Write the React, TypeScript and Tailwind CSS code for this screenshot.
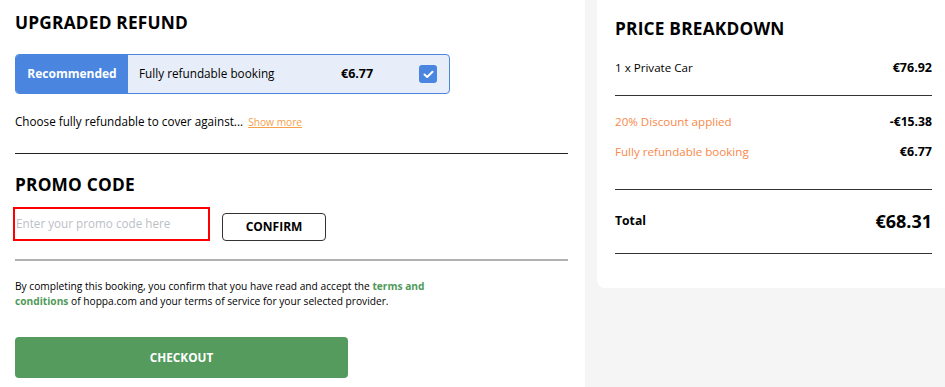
export default function App() {
  return (
    <div className="flex h-[387px] w-[945px] overflow-hidden bg-white font-['Open_Sans',sans-serif] text-black">
      <div className="w-[585px] shrink-0 bg-white pl-[15px] pr-[17px]">
        <h2 className="mt-[10px] text-[17.3px] font-bold leading-[26px] tracking-[0.2px]">UPGRADED REFUND</h2>

        <div className="mt-[18px] flex h-[40px] w-[435px] overflow-hidden rounded-[4px] border border-[#4a86e0] bg-[#e8eef9]">
          <div className="flex w-[112px] items-center justify-center bg-[#4a86e0] text-[12px] font-bold text-white">
            Recommended
          </div>
          <div className="flex flex-1 items-center pl-[11px] text-[11.75px]">
            <span className="w-[202px]">Fully refundable booking</span>
            <span className="text-[12.5px] font-bold">€6.77</span>
            <span className="ml-auto mr-[12px] flex h-[18px] w-[18px] items-center justify-center rounded-[3px] bg-[#4a86e0]">
              <svg width="11" height="9" viewBox="0 0 11 9" fill="none">
                <path d="M1.5 4.5 L4.2 7 L9.5 1.8" stroke="white" strokeWidth="2" strokeLinecap="round" strokeLinejoin="round" />
              </svg>
            </span>
          </div>
        </div>

        <p className="mt-[17px] text-[11.7px] leading-[20px]">
          Choose fully refundable to cover against...{" "}
          <span className="ml-[2px] text-[10.2px] text-[#f5a04a] underline">Show more</span>
        </p>

        <div className="mt-[21px] h-px bg-[#222]" />

        <h2 className="mt-[18px] text-[17.3px] font-bold leading-[26px] tracking-[0.2px]">PROMO CODE</h2>

        <div className="mt-[9px] flex items-center">
          <div className="-ml-[2px] flex h-[34px] w-[197px] items-center border-2 border-[#f00] pl-[1px] text-[11.7px] text-[#bcc0c6]">
            Enter your promo code here
          </div>
          <button className="ml-[12px] mt-[6px] h-[28px] w-[104px] rounded-[4px] border border-[#333] text-[12px] font-bold">
            CONFIRM
          </button>
        </div>

        <div className="mt-[18px] h-[2px] bg-[#b0b0b0]" />

        <p className="mt-[18px] text-[10.2px] leading-[15px]">
          By completing this booking, you confirm that you have read and accept the{" "}
          <span className="font-bold text-[#4f9a5a]">terms and</span>
          <br />
          <span className="font-bold text-[#4f9a5a]">conditions</span> of hoppa.com and your terms of service for your selected provider.
        </p>

        <button className="mt-[28px] h-[41px] w-[333px] rounded-[4px] bg-[#559b5e] text-[11.75px] font-bold text-white">
          CHECKOUT
        </button>
      </div>

      <div className="flex-1 bg-[#f5f5f5] pl-[12px]">
        <div className="h-[288px] rounded-bl-[8px] bg-white pl-[18px] pr-[13px]">
          <h2 className="pt-[16px] text-[17.3px] font-bold leading-[26px] tracking-[0.2px]">PRICE BREAKDOWN</h2>

          <div className="mt-[16px] flex justify-between text-[11.6px] leading-[20px]">
            <span>1 x Private Car</span>
            <span className="text-[12.5px] font-bold">€76.92</span>
          </div>

          <div className="mt-[17px] h-px bg-[#333]" />

          <div className="mt-[16px] flex justify-between text-[11.6px] leading-[20px]">
            <span className="text-[#f7894a]">20% Discount applied</span>
            <span className="text-[12.2px] font-bold">-€15.38</span>
          </div>
          <div className="mt-[10px] flex justify-between text-[11.6px] leading-[20px]">
            <span className="text-[#f7894a]">Fully refundable booking</span>
            <span className="text-[12.5px] font-bold">€6.77</span>
          </div>

          <div className="mt-[27px] h-px bg-[#333]" />

          <div className="mt-[18px] flex items-center justify-between">
            <span className="text-[12.2px] font-bold">Total</span>
            <span className="text-[18px] font-bold">€68.31</span>
          </div>

          <div className="mt-[18px] h-px bg-[#333]" />
        </div>
      </div>
    </div>
  );
}
